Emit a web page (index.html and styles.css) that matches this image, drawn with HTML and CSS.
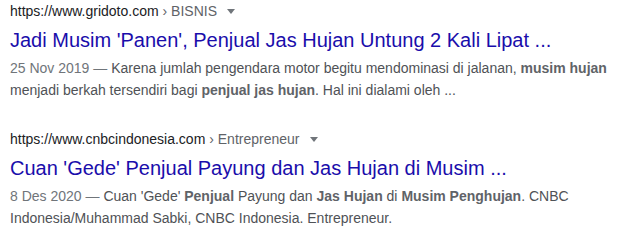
FILE: index.html
```html
<!DOCTYPE html>
<html lang="id">

<head>
  <meta charset="UTF-8">
  <title>Hasil penelusuran</title>
  <link rel="stylesheet" href="styles.css">
</head>

<body>

  <div class="results">

    <div class="result">
      <div class="cite">
        <span>https://www.gridoto.com</span><span class="crumb"> › BISNIS</span>
        <span class="arrow-down"></span>
      </div>
      <a class="title" href="#">Jadi Musim 'Panen', Penjual Jas Hujan Untung 2 Kali Lipat ...</a>
      <div class="snippet">
        <span class="date">25 Nov 2019 — </span>Karena jumlah pengendara motor begitu mendominasi di jalanan,
        <b>musim hujan</b> menjadi berkah tersendiri bagi <b>penjual jas hujan</b>. Hal ini dialami oleh ...
      </div>
    </div>

    <div class="result">
      <div class="cite">
        <span>https://www.cnbcindonesia.com</span><span class="crumb"> › Entrepreneur</span>
        <span class="arrow-down"></span>
      </div>
      <a class="title" href="#">Cuan 'Gede' Penjual Payung dan Jas Hujan di Musim ...</a>
      <div class="snippet">
        <span class="date">8 Des 2020 — </span>Cuan 'Gede' <b>Penjual</b> Payung dan <b>Jas Hujan</b> di
        <b>Musim Penghujan</b>. CNBC Indonesia/Muhammad Sabki, CNBC Indonesia. Entrepreneur.
      </div>
    </div>

  </div>

</body>

</html>
```

FILE: styles.css
```css
body {
  margin: 0;
  background-color: #ffffff;
  font-family: "Liberation Sans", Arial, sans-serif;
}

.results {
  width: 600px;
  padding: 2px 0 0 10px;
}

.result {
  margin-bottom: 29px;
}

.result:last-child {
  margin-bottom: 0;
}

.cite {
  display: flex;
  align-items: center;
  font-size: 14px;
  line-height: 18px;
  color: #202124;
  white-space: pre;
}

.crumb {
  color: #5f6368;
}

.arrow-down {
  width: 0;
  height: 0;
  margin-left: 10px;
  margin-top: 1px;
  border-top: 5px solid #70757a;
  border-left: 4px solid transparent;
  border-right: 4px solid transparent;
}

.title {
  display: block;
  margin-top: 7px;
  font-size: 20px;
  line-height: 26px;
  color: #1a0dab;
  text-decoration: none;
}

.snippet {
  margin-top: 4px;
  font-size: 14px;
  line-height: 22px;
  color: #4f5256;
}

.snippet b {
  color: #5f6368;
}

.date {
  color: #70757a;
}
```
